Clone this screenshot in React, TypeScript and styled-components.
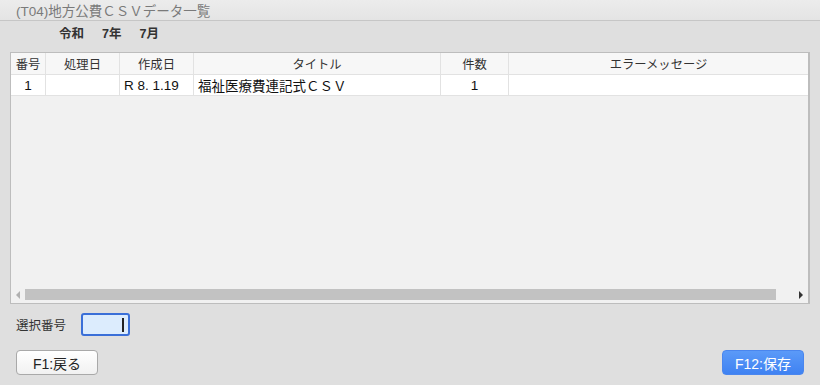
import React from 'react';
import styled, { createGlobalStyle } from 'styled-components';

const GlobalStyle = createGlobalStyle`
  html, body {
    margin: 0;
    padding: 0;
    background: #dfdfdf;
  }
  body {
    font-family: "Liberation Sans", "Noto Sans CJK JP", sans-serif;
    color: #222;
  }
`;

const Window = styled.div`
  width: 820px;
  height: 385px;
  display: flex;
  flex-direction: column;
  background: #dfdfdf;
  overflow: hidden;
`;

const TitleBar = styled.div`
  height: 20px;
  display: flex;
  align-items: center;
  padding-left: 16px;
  background: linear-gradient(#ececec, #e4e4e4);
  border-bottom: 1px solid #c6c6c6;
  color: #7a7a7a;
  font-size: 13.5px;
`;

const Period = styled.div`
  height: 23px;
  display: flex;
  align-items: center;
  gap: 18px;
  padding-left: 59px;
  font-size: 12.5px;
  font-weight: bold;
  color: #333;
`;

const Grid = styled.div`
  margin: 8px 10px 0 10px;
  height: 250px;
  display: flex;
  flex-direction: column;
  background: #f1f1f1;
  border: 1px solid #bdbdbd;
  border-right-width: 2px;
`;

const Row = styled.div<{ $head?: boolean }>`
  display: grid;
  grid-template-columns: 35px 74px 74px 247px 68px 1fr;
  height: ${(p) => (p.$head ? 21 : 20)}px;
  background: ${(p) => (p.$head ? '#f7f7f7' : '#ffffff')};
  border-bottom: 1px solid #e2e2e2;
`;

const Cell = styled.div<{ $align?: string; $head?: boolean }>`
  display: flex;
  align-items: center;
  justify-content: ${(p) => p.$align || 'flex-start'};
  padding: 0 4px;
  border-right: 1px solid #e2e2e2;
  font-size: ${(p) => (p.$head ? 12.3 : 13.5)}px;
  color: ${(p) => (p.$head ? '#333' : '#111')};
  white-space: nowrap;
  overflow: hidden;
  &:last-child {
    border-right: none;
  }
`;

const Body = styled.div`
  flex: 1;
`;

const ScrollBar = styled.div`
  height: 11px;
  margin-bottom: 3px;
  display: flex;
  align-items: center;
  padding: 0 5px 0 5px;
  gap: 5px;
`;

const Arrow = styled.div<{ $dir: 'left' | 'right'; $dark?: boolean }>`
  width: 0;
  height: 0;
  border-top: 4px solid transparent;
  border-bottom: 4px solid transparent;
  ${(p) =>
    p.$dir === 'left'
      ? `border-right: 4px solid ${p.$dark ? '#333' : '#b0b0b0'};`
      : `border-left: 4px solid ${p.$dark ? '#333' : '#b0b0b0'};`}
`;

const Track = styled.div`
  flex: 1;
  height: 11px;
  background: #c2c2c2;
  margin-right: 18px;
`;

const SelectRow = styled.div`
  display: flex;
  align-items: center;
  gap: 15px;
  padding: 9px 0 0 16px;
  font-size: 12.5px;
  color: #333;
`;

const NumberInput = styled.div`
  width: 41px;
  height: 19px;
  border: 2px solid #3a6fd8;
  border-radius: 3px;
  background: #dcecfd;
  display: flex;
  align-items: center;
  justify-content: flex-end;
  padding-right: 4px;
  box-sizing: content-box;
`;

const Caret = styled.div`
  width: 2px;
  height: 14px;
  background: #222;
`;

const Footer = styled.div`
  display: flex;
  justify-content: space-between;
  padding: 14px 16px 0 16px;
`;

const Button = styled.button<{ $primary?: boolean }>`
  width: 82px;
  height: 25px;
  border-radius: 4px;
  font-family: inherit;
  font-size: 14px;
  cursor: pointer;
  border: 1px solid ${(p) => (p.$primary ? '#4a86ee' : '#a9a9a9')};
  background: ${(p) => (p.$primary ? 'linear-gradient(#5b9af8, #3f82f2)' : 'linear-gradient(#ffffff, #f1f1f1)')};
  color: ${(p) => (p.$primary ? '#ffffff' : '#222')};
`;

const columns = [
  { label: '番号', align: 'center' },
  { label: '処理日', align: 'center' },
  { label: '作成日', align: 'center' },
  { label: 'タイトル', align: 'center' },
  { label: '件数', align: 'center' },
  { label: 'エラーメッセージ', align: 'center' },
];

const rows = [
  { no: '1', done: '', created: 'R 8. 1.19', title: '福祉医療費連記式ＣＳＶ', count: '1', error: '' },
];

function App() {
  return (
    <Window>
      <GlobalStyle />
      <TitleBar>(T04)地方公費ＣＳＶデータ一覧</TitleBar>
      <Period>
        <span>令和</span>
        <span>7年</span>
        <span>7月</span>
      </Period>
      <Grid>
        <Row $head>
          {columns.map((c) => (
            <Cell key={c.label} $head $align={c.align}>
              {c.label}
            </Cell>
          ))}
        </Row>
        {rows.map((r) => (
          <Row key={r.no}>
            <Cell $align="center">{r.no}</Cell>
            <Cell>{r.done}</Cell>
            <Cell>{r.created}</Cell>
            <Cell>{r.title}</Cell>
            <Cell $align="center">{r.count}</Cell>
            <Cell>{r.error}</Cell>
          </Row>
        ))}
        <Body />
        <ScrollBar>
          <Arrow $dir="left" />
          <Track />
          <Arrow $dir="right" $dark />
        </ScrollBar>
      </Grid>
      <SelectRow>
        <span>選択番号</span>
        <NumberInput>
          <Caret />
        </NumberInput>
      </SelectRow>
      <Footer>
        <Button>F1:戻る</Button>
        <Button $primary>F12:保存</Button>
      </Footer>
    </Window>
  );
}

export default App;
